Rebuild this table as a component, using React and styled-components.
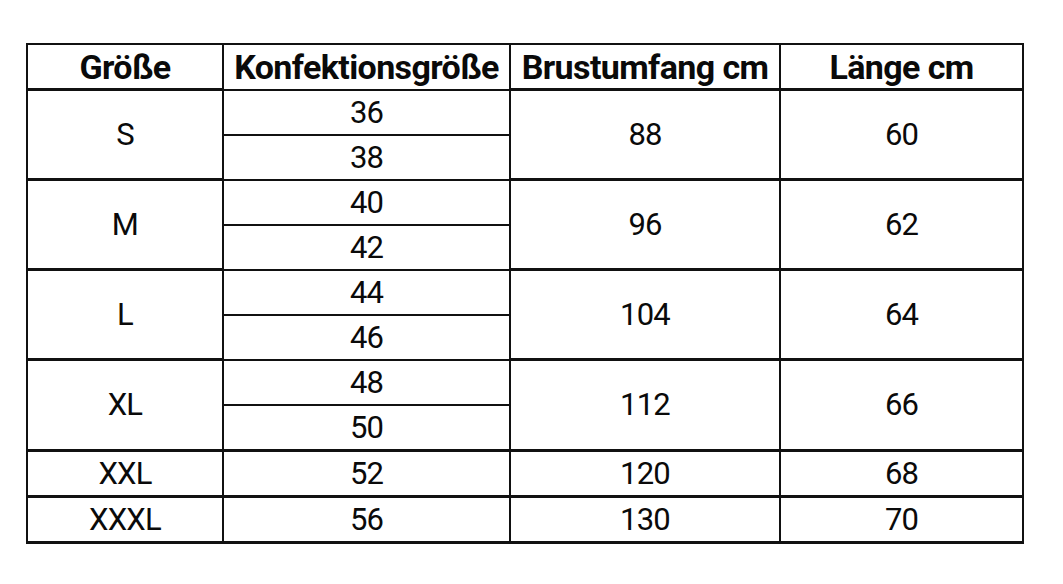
import React from 'react';
import styled, { createGlobalStyle } from 'styled-components';

const GlobalStyle = createGlobalStyle`
  html, body {
    margin: 0;
    padding: 0;
    background: #fff;
  }
  body {
    font-family: Roboto, "Liberation Sans", sans-serif;
    color: #0a0a0a;
  }
`;

const Page = styled.div`
  padding: 43px 0 0 26px;
`;

const Table = styled.table`
  border-collapse: collapse;
  table-layout: fixed;
  width: 996px;
  border: 2.5px solid #111;
`;

const Head = styled.th`
  height: 43px;
  padding: 0;
  border: 2.5px solid #111;
  font-weight: 700;
  font-size: 34px;
  line-height: 1;
  letter-spacing: -0.6px;
  text-align: center;
  vertical-align: middle;
  white-space: nowrap;
`;

const Cell = styled.td`
  height: 43px;
  padding: 0;
  border-left: 2.5px solid #111;
  border-right: 2.5px solid #111;
  border-top: ${(p) => (p.$sub ? '2px' : '3px')} solid #111;
  border-bottom: ${(p) => (p.$sub ? '2px' : '3px')} solid #111;
  font-size: 31px;
  letter-spacing: -0.8px;
  text-align: center;
  vertical-align: middle;
`;

const groups = [
  { size: 'S', conf: ['36', '38'], brust: '88', len: '60' },
  { size: 'M', conf: ['40', '42'], brust: '96', len: '62' },
  { size: 'L', conf: ['44', '46'], brust: '104', len: '64' },
  { size: 'XL', conf: ['48', '50'], brust: '112', len: '66' },
  { size: 'XXL', conf: ['52'], brust: '120', len: '68' },
  { size: 'XXXL', conf: ['56'], brust: '130', len: '70' },
];

const App = () => (
  <>
    <GlobalStyle />
    <Page>
      <Table>
        <colgroup>
          <col style={{ width: 196 }} />
          <col style={{ width: 287 }} />
          <col style={{ width: 270 }} />
          <col style={{ width: 243 }} />
        </colgroup>
        <thead>
          <tr>
            <Head>Größe</Head>
            <Head>Konfektionsgröße</Head>
            <Head>Brustumfang cm</Head>
            <Head>Länge cm</Head>
          </tr>
        </thead>
        <tbody>
          {groups.map((g) =>
            g.conf.map((c, i) => (
              <tr key={g.size + c}>
                {i === 0 && <Cell rowSpan={g.conf.length}>{g.size}</Cell>}
                <Cell $sub={g.conf.length > 1}>{c}</Cell>
                {i === 0 && <Cell rowSpan={g.conf.length}>{g.brust}</Cell>}
                {i === 0 && <Cell rowSpan={g.conf.length}>{g.len}</Cell>}
              </tr>
            ))
          )}
        </tbody>
      </Table>
    </Page>
  </>
);

export default App;
